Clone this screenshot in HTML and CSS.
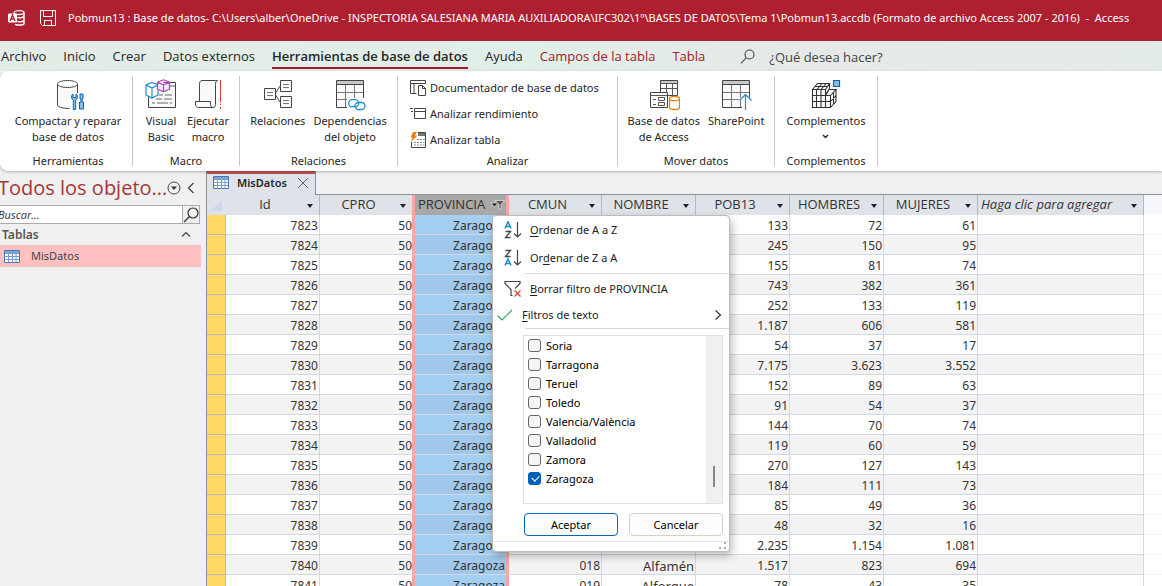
FILE: index.html
```html
<!DOCTYPE html>
<html lang="es">
<head>
<meta charset="utf-8">
<title>Pobmun13 : Base de datos - Access</title>
<link rel="stylesheet" href="styles.css">
</head>
<body>
<header class="titlebar">
  <svg class="app-icon" width="17" height="16" viewBox="0 0 17 16" aria-hidden="true">
    <ellipse cx="11" cy="2.6" rx="5" ry="1.9" fill="none" stroke="#fff" stroke-width="1.3"/>
    <path d="M16 2.6v10.6c0 1-2.2 1.9-5 1.9-1.600 0-3-.3-4-.8M9.500 7.500c3 .6 6.500-.2 6.500-1.400M9.500 11.500c3 .6 6.500-.2 6.500-1.600" fill="none" stroke="#fff" stroke-width="1.500"/>
    <rect x="0" y="3.500" width="9" height="9" rx="1" fill="#fff"/>
    <path d="M2 11 4.500 5 7 11M3 9h3" fill="none" stroke="#ae2030" stroke-width="1.300"/>
  </svg>
  <button class="save" aria-label="Guardar">
    <svg width="16" height="16" viewBox="0 0 16 16"><path d="M.5.5h15v15H2.500l-2-2zM3.500.5v6h9v-6M4.500 15.500v-5h7v5" fill="none" stroke="#fff"/></svg>
  </button>
  <h1 class="title">Pobmun13 : Base de datos- C:\Users\alber\OneDrive - INSPECTORIA SALESIANA MARIA AUXILIADORA\IFC302\1º\BASES DE DATOS\Tema 1\Pobmun13.accdb (Formato de archivo Access 2007 - 2016) &nbsp;-&nbsp; Access</h1>
</header>

<nav class="tabs">
  <a href="#archivo">Archivo</a>
  <a href="#inicio">Inicio</a>
  <a href="#crear">Crear</a>
  <a href="#externos">Datos externos</a>
  <a href="#herramientas" class="active">Herramientas de base de datos</a>
  <a href="#ayuda">Ayuda</a>
  <a href="#campos" class="context">Campos de la tabla</a>
  <a href="#tabla" class="context">Tabla</a>
  <button class="tell-me">
    <svg width="16" height="16" viewBox="0 0 16 16"><circle cx="9.500" cy="5.500" r="4.500" fill="none" stroke="#444" stroke-width="1.100"/><path d="M6.300 8.700 1 14.500" stroke="#444" stroke-width="1.100"/></svg>
    <span>¿Qué desea hacer?</span>
  </button>
</nav>

<section class="ribbon">
  <div class="group g-tools">
    <div class="commands">
      <button class="cmd">
        <svg width="32" height="32" viewBox="-1 0 32 32"><path d="M4.500 5v22c0 2 4.500 3.500 10 3.500V18h9.500V5" fill="#fafafa"/><path d="M24.500 14V5c0-2-4.500-3.500-10-3.500S4.500 3 4.500 5v21c0 1.800 4 3.300 12 3.500M4.500 5c0 2 4.500 3.500 10 3.500s10-1.500 10-3.500" fill="none" stroke="#444"/><path d="M20 15v3.500h3V15c2 1 2 5-.3 6v9.500h-2.400V21c-2.300-1-2.300-5-.3-6M27 15h3v5h-1v3h1.500v7h-4v-7H28v-3h-1z" fill="#83beec" stroke="#0f64b0"/></svg>
        <span>Compactar y reparar<br>base de datos</span>
      </button>
    </div>
    <h2>Herramientas</h2>
  </div>
  <div class="group g-macro">
    <div class="commands">
      <button class="cmd">
        <svg width="32" height="32" viewBox="0 0 32 32"><path d="M3.500 12v16.500h27v-25H18" fill="#fafafa" stroke="#444"/><path d="M17 7h13M14 16h4M20 16h7M11 20h6M19 20h8M7 24h3M12 24h11M25 24h2" stroke="#666" fill="none"/><path d="M7 3.500 13 6v10l-6 3-6-3V6zM1 6l6 3 6-3M7 9v10" fill="#fff" stroke="#1e8bcd" stroke-width="1.200"/><path d="m18.500.8 6 2.400v7l-6 2.600-6-2.600v-7zM12.500 3.200l6 2.600 6-2.600M18.500 5.800v7" fill="#f7e8f7" stroke="#b146c2" stroke-width="1.200"/></svg>
        <span>Visual<br>Basic</span>
      </button>
      <button class="cmd">
        <svg width="32" height="32" viewBox="0 0 32 32"><path d="M23.500 1.500H10c-2 0-2.500 2-2.500 4v17h11v3c0 2 1 3 2.500 3s2.500-1 2.500-3v-20c0-2 .5-4 2-4zM18.500 22.500h-15v2.500c0 2 1 3.500 3 3.500H21" fill="#fafafa" stroke="#444"/><path d="M28.500 1v22M28.500 24.500V26M28.500 28v2" stroke="#e03c31" fill="none"/></svg>
        <span>Ejecutar<br>macro</span>
      </button>
    </div>
    <h2>Macro</h2>
  </div>
  <div class="group g-relations">
    <div class="commands">
      <button class="cmd">
        <svg width="32" height="32" viewBox="0 0 32 32"><path d="m13 15 5-8M13 15l5 8" stroke="#444"/><path d="M2.500 9.500h11v11h-11zM18.500 1.500h11v11h-11zM18.500 17.500h11v11h-11z" fill="#fafafa" stroke="#444"/><path d="M5 13.500h6M5 16.500h6M21 5.500h6M21 8.500h6M21 21.500h6M21 24.500h6" stroke="#777"/></svg>
        <span>Relaciones</span>
      </button>
      <button class="cmd">
        <svg width="32" height="32" viewBox="0 0 32 32"><path d="M2.500 1.500h27v27h-27z" fill="#fafafa"/><path d="M3 2h26v3H3z" fill="#c8c8c8"/><path d="M3 13.500h26M3 20.500h26M11.500 5v23M20.500 5v23" stroke="#777"/><path d="M2.500 1.500h27v27h-27zM2.500 5.500h27" fill="none" stroke="#444"/><path d="M13 19h19v13H13z" fill="#fff"/><rect x="14.700" y="20.700" width="10" height="7" rx="3.500" fill="none" stroke="#1e8bcd" stroke-width="1.300"/><rect x="21" y="23.500" width="10" height="7" rx="3.500" fill="none" stroke="#1e8bcd" stroke-width="1.300"/></svg>
        <span>Dependencias<br>del objeto</span>
      </button>
    </div>
    <h2>Relaciones</h2>
  </div>
  <div class="group g-analyze">
    <div class="stack">
      <button class="line"><svg width="16" height="16" viewBox="0 0 16 16"><path d="M6.500 13.500h-6V.5h15v3M.5 3.500h15M4 4v9" fill="none" stroke="#444"/><path d="M8.500 5.500h4l3 3v7h-7zM12.500 5.500v3h3" fill="#fff" stroke="#444"/></svg><span>Documentador de base de datos</span></button>
      <button class="line"><svg width="16" height="16" viewBox="0 0 16 16"><path d="M4.500 2.500h11v10h-11zM4.500 5.500h11M0 2.500h3M1 5.500h2" fill="none" stroke="#444"/></svg><span>Analizar rendimiento</span></button>
      <button class="line"><svg width="16" height="16" viewBox="0 0 16 16"><path d="M8 .5h7.500v15H1.500V10" fill="none" stroke="#444"/><path d="M8 1h7v3H8z" fill="#777"/><path d="M7 7.500h2M10 7.500h2M13 7.500h1.500M4 10.500h2M7 10.500h2M10 10.500h2M13 10.500h1.500M4 13h2M7 13h2M10 13h2M13 13h1.500" stroke="#888"/><path d="M3 0h4L5 3.500h2.500L1 10l1.500-4.500H.5z" fill="#e8810c"/></svg><span>Analizar tabla</span></button>
    </div>
    <h2>Analizar</h2>
  </div>
  <div class="group g-move">
    <div class="commands">
      <button class="cmd">
        <svg width="32" height="32" viewBox="0 0 32 32"><path d="M12.500 1.500h17v15h-17z" fill="#fafafa" stroke="#444"/><path d="M13 2h16v2.500H13z" fill="#c8c8c8"/><path d="M12.500 4.500h17M12.500 9.500h17M18.500 5v8M24.500 5v12" stroke="#555" fill="none"/><path d="M2.500 13.500h17v15h-17z" fill="#fafafa" stroke="#444"/><path d="M2.500 16.500h17M5 20.500h3M5 25.500h3M10.500 18.500h6v3h-6zM10.500 23.500h6v3h-6z" fill="none" stroke="#555"/><path d="M20 17h13v15H20z" fill="#fff"/><path d="M21.500 19.500v9c0 1 2 2 5 2s5-1 5-2v-9" fill="#fff" stroke="#e8810c" stroke-width="1.300"/><ellipse cx="26.500" cy="19.500" rx="5" ry="2.200" fill="#fff" stroke="#e8810c" stroke-width="1.300"/></svg>
        <span>Base de datos<br>de Access</span>
      </button>
      <button class="cmd">
        <svg width="32" height="32" viewBox="0 0 32 32"><path d="M2.500 1.500h27v27h-27z" fill="#fafafa"/><path d="M3 2h26v3H3z" fill="#c8c8c8"/><path d="M3 13.500h26M3 20.500h26M11.500 5v23M20.500 5v23" stroke="#777"/><path d="M2.500 1.500h27v27h-27zM2.500 5.500h27" fill="none" stroke="#444"/><path d="m18 21 7.500-7 6.500 7v9H22v-9z" fill="#fff"/><path d="M25.500 31V16M19.500 21.500l6-6 6 6" fill="none" stroke="#1e8bcd" stroke-width="1.200"/></svg>
        <span>SharePoint</span>
      </button>
    </div>
    <h2>Mover datos</h2>
  </div>
  <div class="group g-addins">
    <div class="commands">
      <button class="cmd">
        <svg width="32" height="32" viewBox="0 0 32 32"><path d="M2.500 10.500 8 4.500h11l-2 5 4 1h5l-5 5v13H2.500z" fill="#fafafa"/><path d="M2.500 10.500h13v18h-13zM6.500 10.500v18M11 10.500v18M2.500 16.500h18M2.500 22.500h18M15.500 16.500h5v12h-5M2.500 10.500l5-6h12l-4 6M7 10.500l5-6M11 10.500l5-6M5 7.500h13M19.500 4.500v5l-4 6M20.500 16.500l5.500-6h-7l-3.500 6M20.500 22.500l5.500-6M20.500 28.500l5.500-6v-12M23.500 13.500v12" fill="none" stroke="#333" stroke-width="1.100"/><path d="M23.500 1.500h6v6h-6z" fill="#83beec" stroke="#0f64b0" stroke-width="1.200"/></svg>
        <span>Complementos</span>
        <svg class="caret" width="7" height="5" viewBox="0 0 7 5"><path d="m1 1 2.500 2.500L6 1" fill="none" stroke="#222" stroke-width="1.400"/></svg>
      </button>
    </div>
    <h2>Complementos</h2>
  </div>
</section>

<main class="workspace">
  <aside class="navpane">
    <div class="nav-head">
      <h2>Todos los objeto...</h2>
      <button aria-label="Elegir categoría"><svg width="14" height="14" viewBox="0 0 14 14"><circle cx="7" cy="7" r="6" fill="none" stroke="#444"/><path d="M4 5.500h6L7 9z" fill="#333"/></svg></button>
      <button aria-label="Contraer panel"><svg width="8" height="12" viewBox="0 0 8 12"><path d="M6.500 1 1.500 6l5 5" fill="none" stroke="#444" stroke-width="1.300"/></svg></button>
    </div>
    <form class="search">
      <input type="text" placeholder="Buscar..." aria-label="Buscar">
      <button type="button" aria-label="Buscar"><svg width="16" height="16" viewBox="0 0 16 16"><circle cx="10" cy="6" r="5" fill="none" stroke="#333" stroke-width="1.200"/><path d="M6.500 9.500 1 15" stroke="#333" stroke-width="1.200"/></svg></button>
    </form>
    <button class="nav-group"><span>Tablas</span><svg width="10" height="7" viewBox="0 0 10 7"><path d="m1 5.500 4-4 4 4" fill="none" stroke="#444" stroke-width="1.200"/></svg></button>
    <a class="nav-item" href="#misdatos">
      <svg width="16" height="13" viewBox="0 0 16 13"><path d="M.5.5h15v12H.5z" fill="#fff" stroke="#4a76ad"/><path d="M1 1h14v2.500H1z" fill="#7ba3d3"/><path d="M1 3.500h14M1 6.500h14M1 9.500h14M4.500 3v9.500M8.500 3v9.500M12 3v9.500" stroke="#7b9cc8"/></svg>
      <span>MisDatos</span>
    </a>
  </aside>

  <section class="document">
    <div class="doc-tabs">
      <div class="doc-tab">
        <svg width="16" height="13" viewBox="0 0 16 13"><path d="M.5.5h15v12H.5z" fill="#fff" stroke="#4a76ad"/><path d="M1 1h14v2.500H1z" fill="#7ba3d3"/><path d="M1 3.500h14M1 6.500h14M1 9.500h14M4.500 3v9.500M8.500 3v9.500M12 3v9.500" stroke="#7b9cc8"/></svg>
        <span>MisDatos</span>
        <button aria-label="Cerrar"><svg width="12" height="12" viewBox="0 0 12 12"><path d="m1 1 10 10M11 1 1 11" stroke="#666"/></svg></button>
      </div>
    </div>
    <div class="sheet">
      <table>
        <colgroup><col class="c-sel"><col><col><col><col><col><col><col><col><col class="c-add"></colgroup>
        <thead>
          <tr>
            <th class="corner" aria-label="Seleccionar todo"></th>
            <th>Id</th><th>CPRO</th><th class="filtered">PROVINCIA<svg width="14" height="10" viewBox="0 0 14 10"><path d="M0 3h7L3.500 7z" fill="#222" stroke="#fff" stroke-width=".6"/><path d="M4 .5h9.500L10 4.500V9H8V4.500z" fill="#555" stroke="#eee" stroke-width=".7"/></svg></th><th>CMUN</th><th>NOMBRE</th><th>POB13</th><th>HOMBRES</th><th>MUJERES</th><th class="add">Haga clic para agregar</th>
          </tr>
        </thead>
        <tbody>
          <tr><td></td><td>7823</td><td>50</td><td>Zaragoza</td><td></td><td></td><td>133</td><td>72</td><td>61</td><td></td></tr>
          <tr><td></td><td>7824</td><td>50</td><td>Zaragoza</td><td></td><td></td><td>245</td><td>150</td><td>95</td><td></td></tr>
          <tr><td></td><td>7825</td><td>50</td><td>Zaragoza</td><td></td><td></td><td>155</td><td>81</td><td>74</td><td></td></tr>
          <tr><td></td><td>7826</td><td>50</td><td>Zaragoza</td><td></td><td></td><td>743</td><td>382</td><td>361</td><td></td></tr>
          <tr><td></td><td>7827</td><td>50</td><td>Zaragoza</td><td></td><td></td><td>252</td><td>133</td><td>119</td><td></td></tr>
          <tr><td></td><td>7828</td><td>50</td><td>Zaragoza</td><td></td><td></td><td>1.187</td><td>606</td><td>581</td><td></td></tr>
          <tr><td></td><td>7829</td><td>50</td><td>Zaragoza</td><td></td><td></td><td>54</td><td>37</td><td>17</td><td></td></tr>
          <tr><td></td><td>7830</td><td>50</td><td>Zaragoza</td><td></td><td></td><td>7.175</td><td>3.623</td><td>3.552</td><td></td></tr>
          <tr><td></td><td>7831</td><td>50</td><td>Zaragoza</td><td></td><td></td><td>152</td><td>89</td><td>63</td><td></td></tr>
          <tr><td></td><td>7832</td><td>50</td><td>Zaragoza</td><td></td><td></td><td>91</td><td>54</td><td>37</td><td></td></tr>
          <tr><td></td><td>7833</td><td>50</td><td>Zaragoza</td><td></td><td></td><td>144</td><td>70</td><td>74</td><td></td></tr>
          <tr><td></td><td>7834</td><td>50</td><td>Zaragoza</td><td></td><td></td><td>119</td><td>60</td><td>59</td><td></td></tr>
          <tr><td></td><td>7835</td><td>50</td><td>Zaragoza</td><td></td><td></td><td>270</td><td>127</td><td>143</td><td></td></tr>
          <tr><td></td><td>7836</td><td>50</td><td>Zaragoza</td><td></td><td></td><td>184</td><td>111</td><td>73</td><td></td></tr>
          <tr><td></td><td>7837</td><td>50</td><td>Zaragoza</td><td></td><td></td><td>85</td><td>49</td><td>36</td><td></td></tr>
          <tr><td></td><td>7838</td><td>50</td><td>Zaragoza</td><td></td><td></td><td>48</td><td>32</td><td>16</td><td></td></tr>
          <tr><td></td><td>7839</td><td>50</td><td>Zaragoza</td><td></td><td></td><td>2.235</td><td>1.154</td><td>1.081</td><td></td></tr>
          <tr><td></td><td>7840</td><td>50</td><td>Zaragoza</td><td>018</td><td>Alfamén</td><td>1.517</td><td>823</td><td>694</td><td></td></tr>
          <tr><td></td><td>7841</td><td>50</td><td>Zaragoza</td><td>019</td><td>Alforque</td><td>78</td><td>43</td><td>35</td><td></td></tr>
        </tbody>
      </table>

      <div class="menu">
        <button class="item sort"><svg width="18" height="18" viewBox="0 0 18 18"><path d="M1 7.500 4 .8l3 6.700M2 5.500h4" fill="none" stroke="#1e8bcd" stroke-width="1.500"/><path d="M1.500 10.500h5l-5 6h5" fill="none" stroke="#444" stroke-width="1.300"/><path d="M13.500 1v15M10 12.500l3.500 3.500 3.500-3.500" fill="none" stroke="#444" stroke-width="1.200"/></svg><span><u>O</u>rdenar de A a Z</span></button>
        <button class="item sort"><svg width="18" height="18" viewBox="0 0 18 18"><path d="M1.500 1.500h5l-5 6h5" fill="none" stroke="#444" stroke-width="1.300"/><path d="m1 16.500 3-6.700 3 6.700M2 14.500h4" fill="none" stroke="#1e8bcd" stroke-width="1.500"/><path d="M13.500 1v15M10 12.500l3.500 3.500 3.500-3.500" fill="none" stroke="#444" stroke-width="1.200"/></svg><span>Or<u>d</u>enar de Z a A</span></button>
        <hr class="after-sort">
        <button class="item clear"><svg width="18" height="18" viewBox="0 0 18 18"><path d="M8.500 15.500H7v-6L1 3.500v-2h15v2L11 8.500" fill="none" stroke="#444" stroke-width="1.200"/><path d="m10.500 10.500 6 6M16.500 10.500l-6 6" stroke="#e03c31" stroke-width="1.200"/></svg><span><u>B</u>orrar filtro de PROVINCIA</span></button>
        <button class="item text-filters"><svg width="18" height="14" viewBox="0 0 18 14"><path d="m1.500 7.500 4.500 4.500L16 2" fill="none" stroke="#38a05c" stroke-width="1.200"/></svg><span><u>F</u>iltros de texto</span><svg class="arrow" width="8" height="12" viewBox="0 0 8 12"><path d="m1.500 1.500 5 4.500-5 4.500" fill="none" stroke="#333" stroke-width="1.200"/></svg></button>
        <hr>
        <div class="values">
          <div class="checks">
            <label><input type="checkbox"><span>Soria</span></label>
            <label><input type="checkbox"><span>Tarragona</span></label>
            <label><input type="checkbox"><span>Teruel</span></label>
            <label><input type="checkbox"><span>Toledo</span></label>
            <label><input type="checkbox"><span>Valencia/València</span></label>
            <label><input type="checkbox"><span>Valladolid</span></label>
            <label><input type="checkbox"><span>Zamora</span></label>
            <label><input type="checkbox" checked><span>Zaragoza</span></label>
          </div>
          <div class="scrollbar"><div class="thumb"></div></div>
        </div>
        <div class="actions">
          <button class="primary">Aceptar</button>
          <button>Cancelar</button>
        </div>
        <div class="menu-foot"><svg width="8" height="8" viewBox="0 0 8 8"><path d="M5 0h2v2H5zM5 5h2v2H5zM0 5h2v2H0z" fill="#b0b0b0"/></svg></div>
      </div>
    </div>
  </section>
</main>
</body>
</html>
```

FILE: styles.css
```css
* { box-sizing: border-box; }

body {
  margin: 0;
  height: 100vh;
  overflow: hidden;
  display: flex;
  flex-direction: column;
  background: #f0f0f0;
  color: #262626;
  font: 12px/16px "Noto Sans", "Open Sans", sans-serif;
}

h1, h2 { margin: 0; font-size: inherit; font-weight: 400; }

button {
  border: 0;
  padding: 0;
  background: none;
  color: inherit;
  font: inherit;
}

a { color: inherit; text-decoration: none; }
svg { display: block; flex: none; }

/* Title bar */
.titlebar {
  flex: none;
  height: 41px;
  padding: 0 0 6px 8px;
  display: flex;
  align-items: center;
  background: #ae2030;
  color: #fff;
}
.save { margin: 0 12px 0 15px; }
.title { flex: 1; min-width: 0; overflow: hidden; white-space: nowrap; font-size: 11px; }

/* Ribbon tabs */
.tabs {
  flex: none;
  height: 30px;
  padding: 2px 0 0 1px;
  display: flex;
  align-items: center;
  background: linear-gradient(90deg, #e4ece6, #e0efe8 45%, #e6e9e8 70%, #e4ece7);
  font-family: "Open Sans", sans-serif;
  font-size: 13px;
  white-space: nowrap;
}
.tabs a { margin-right: 17px; line-height: 22px; border-bottom: 2px solid transparent; }
.tabs .active { font-weight: 600; border-color: #a4182c; }
.tabs .context { color: #a4182c; }
.tell-me { display: flex; gap: 13px; margin-left: 18px; color: #444; }

/* Ribbon */
.ribbon {
  flex: none;
  height: 100px;
  padding: 5px 0;
  display: flex;
  background: #fff;
  border-radius: 8px 0 0 8px;
  box-shadow: 0 1px 3px #0004;
  font-size: 11px;
  position: relative;
}
.group {
  display: flex;
  flex-direction: column;
  align-items: center;
  justify-content: space-between;
  border-right: 1px solid #c8c8c8;
}
.group h2 { line-height: 16px; margin-bottom: -3px; }
.g-tools { width: 133px; padding-left: 4px; }
.g-macro { width: 107px; }
.g-relations { width: 158px; }
.g-analyze { width: 220px; }
.g-move { width: 157px; }
.g-addins { width: 103px; }
.commands { display: flex; gap: 8px; padding-top: 3px; }
.g-macro .commands { gap: 10px; padding-left: 2px; }
.cmd { display: flex; flex-direction: column; align-items: center; white-space: nowrap; }
.cmd span { margin-top: 2px; }
.caret { margin-top: 5px; }
.stack { width: 100%; padding: 0 0 0 12px; margin-top: -1px; }
.line { display: flex; align-items: center; gap: 4px; height: 26px; white-space: nowrap; }

/* Workspace */
.workspace { flex: 1; min-height: 0; display: flex; gap: 5px; }

.navpane { width: 201px; flex: none; }
.nav-head { display: flex; align-items: center; height: 34px; gap: 6px; padding-right: 6px; }
.nav-head h2 { flex: 1; min-width: 0; margin-left: -2px; font: 20px/26px "Open Sans", sans-serif; color: #a4373a; white-space: nowrap; }
.search { display: flex; width: 200px; height: 19px; border: 1px solid #ababab; border-left: 0; background: #fff; }
.search input { flex: 1; min-width: 0; border: 0; padding: 0; text-indent: -2px; background: none; font: italic 11px/16px "Open Sans", sans-serif; }
.search input::placeholder { color: #333; opacity: 1; }
.search button { border-left: 1px solid #ababab; background: #f0f0f0; }
.nav-group { display: flex; align-items: center; justify-content: space-between; width: 100%; height: 21px; padding: 0 10px 0 2px; font-weight: 600; color: #555; }
.nav-item { display: flex; align-items: center; gap: 11px; height: 22px; padding-left: 4px; background: #ffc0c2; color: #444; font-size: 11px; }

.document { flex: 1; min-width: 0; display: flex; flex-direction: column; border-left: 1px solid #8c929c; }
.doc-tabs { flex: none; height: 24px; border-bottom: 1px solid #8c929c; }
.doc-tab { display: flex; align-items: center; width: 109px; height: 24px; padding: 0 6px 4px; gap: 8px; background: #dfe2e8; border-top: 3px solid #c0505a; border-right: 1px solid #8c929c; font-size: 11px; font-weight: 600; }
.doc-tab button { margin-left: auto; }

/* Datasheet */
.sheet { flex: 1; min-height: 0; position: relative; background: linear-gradient(#f6f7fd, #f6f7fd) no-repeat 0 0 / 100% 20px, repeating-linear-gradient(#fff 0 19px, #f5f6fa 19px 20px); }
table { width: 937px; table-layout: fixed; border-collapse: separate; border-spacing: 0; font-size: 12px; background: #fff; }
.c-sel { width: 19px; }
.c-add { width: 166px; }
th, td { height: 20px; white-space: nowrap; overflow: hidden; }
th {
  padding: 0 16px 2px 1px;
  border-right: 1px solid #b4bac4;
  background: #dfe2e8;
  font: 13px/18px "Open Sans", sans-serif;
  color: #333;
  position: relative;
}
th::after { content: ""; position: absolute; right: 6px; top: 9px; border: 3px solid transparent; border-top: 4px solid #222; border-bottom: 0; }
th.corner { padding: 0; border-right: 0; background: linear-gradient(135deg, #dfe2e8 50%, #cdd8ec 50%) no-repeat 4px 5px / 11px 11px, #dfe2e8; }
th.corner::after, th.filtered::after { display: none; }
th.filtered { padding: 0 0 2px 3px; text-align: left; background: #a8a8a8; }
th.filtered svg { position: absolute; right: 1px; top: 5px; }
th.add { font-style: italic; padding: 0 0 2px 3px; text-align: left; }
td { padding: 3px 1px 0; line-height: 16px; text-align: right; border-right: 1px solid #d0d7e5; border-bottom: 1px solid #d0d7e5; color: #333; }
tbody tr:nth-child(even) { background: #f3f3f3; }
td:first-child { background: #ffd962; border-color: #b4bac4; }
td:nth-child(3), th:nth-child(3) { border-right: 2px solid #f8a5a8; }
td:nth-child(4), th:nth-child(4) { border-left: 1px solid #f8a5a8; border-right: 2px solid #f8a5a8; }
td:nth-child(5), th:nth-child(5) { border-left: 1px solid #f8a5a8; }
td:nth-child(3) { padding-right: 0; }
td:nth-child(4) { background: #a5cff1; }
td:nth-child(6) { font-size: 13px; }
tr:nth-child(even) td:nth-child(4) { background: #9fc8ea; }

/* Filter menu */
.menu {
  position: absolute;
  left: 285px;
  top: 20px;
  width: 238px;
  background: #fff;
  border: 1px solid #bcbcbc;
  border-radius: 4px;
  box-shadow: 2px 4px 8px #0004;
  font-size: 11px;
  color: #222;
}
.item { display: flex; align-items: center; gap: 8px; width: 100%; height: 28px; padding: 0 7px 0 11px; white-space: nowrap; }
.item u { text-underline-offset: 2px; }
.clear { padding-top: 2px; }
.text-filters { height: 26px; padding-left: 3px; }
.arrow { margin-left: auto; }
.menu hr { height: 1px; margin: 0 0 0 32px; border: 0; background: #d8d8d8; }
.menu .after-sort { margin-top: 1px; }
.values { display: flex; height: 169px; margin: 6px 6px 0 30px; border: 1px solid #e0e0e0; }
.checks { flex: 1; }
.checks label { display: flex; align-items: center; gap: 5px; height: 19px; padding-left: 4px; color: #000; }
.checks input { appearance: none; width: 13px; height: 13px; margin: 0; border: 1px solid #666; border-radius: 3px; background: #f5f5f5; }
.checks input:checked { border-color: #005fb8; background: #005fb8; position: relative; }
.checks input:checked::after { content: ""; position: absolute; left: 3px; top: 2px; width: 6px; height: 4px; border: solid #fff; border-width: 0 0 1px 1px; transform: rotate(-45deg); }
.scrollbar { width: 16px; padding: 130px 0 0 7px; background: #f0f0f0; }
.thumb { width: 2px; height: 21px; background: #868686; }
.actions { display: grid; grid-template-columns: 1fr 1fr; gap: 11px; padding: 9px 6px 5px 31px; }
.actions button { height: 23px; border: 1px solid #d0d0d0; border-radius: 4px; background: #fdfdfd; color: #000; }
.actions .primary { border-color: #0067c0; }
.menu-foot { height: 10px; display: flex; justify-content: flex-end; align-items: end; padding: 1px 2px; border-top: 1px solid #dde3ec; }
```
